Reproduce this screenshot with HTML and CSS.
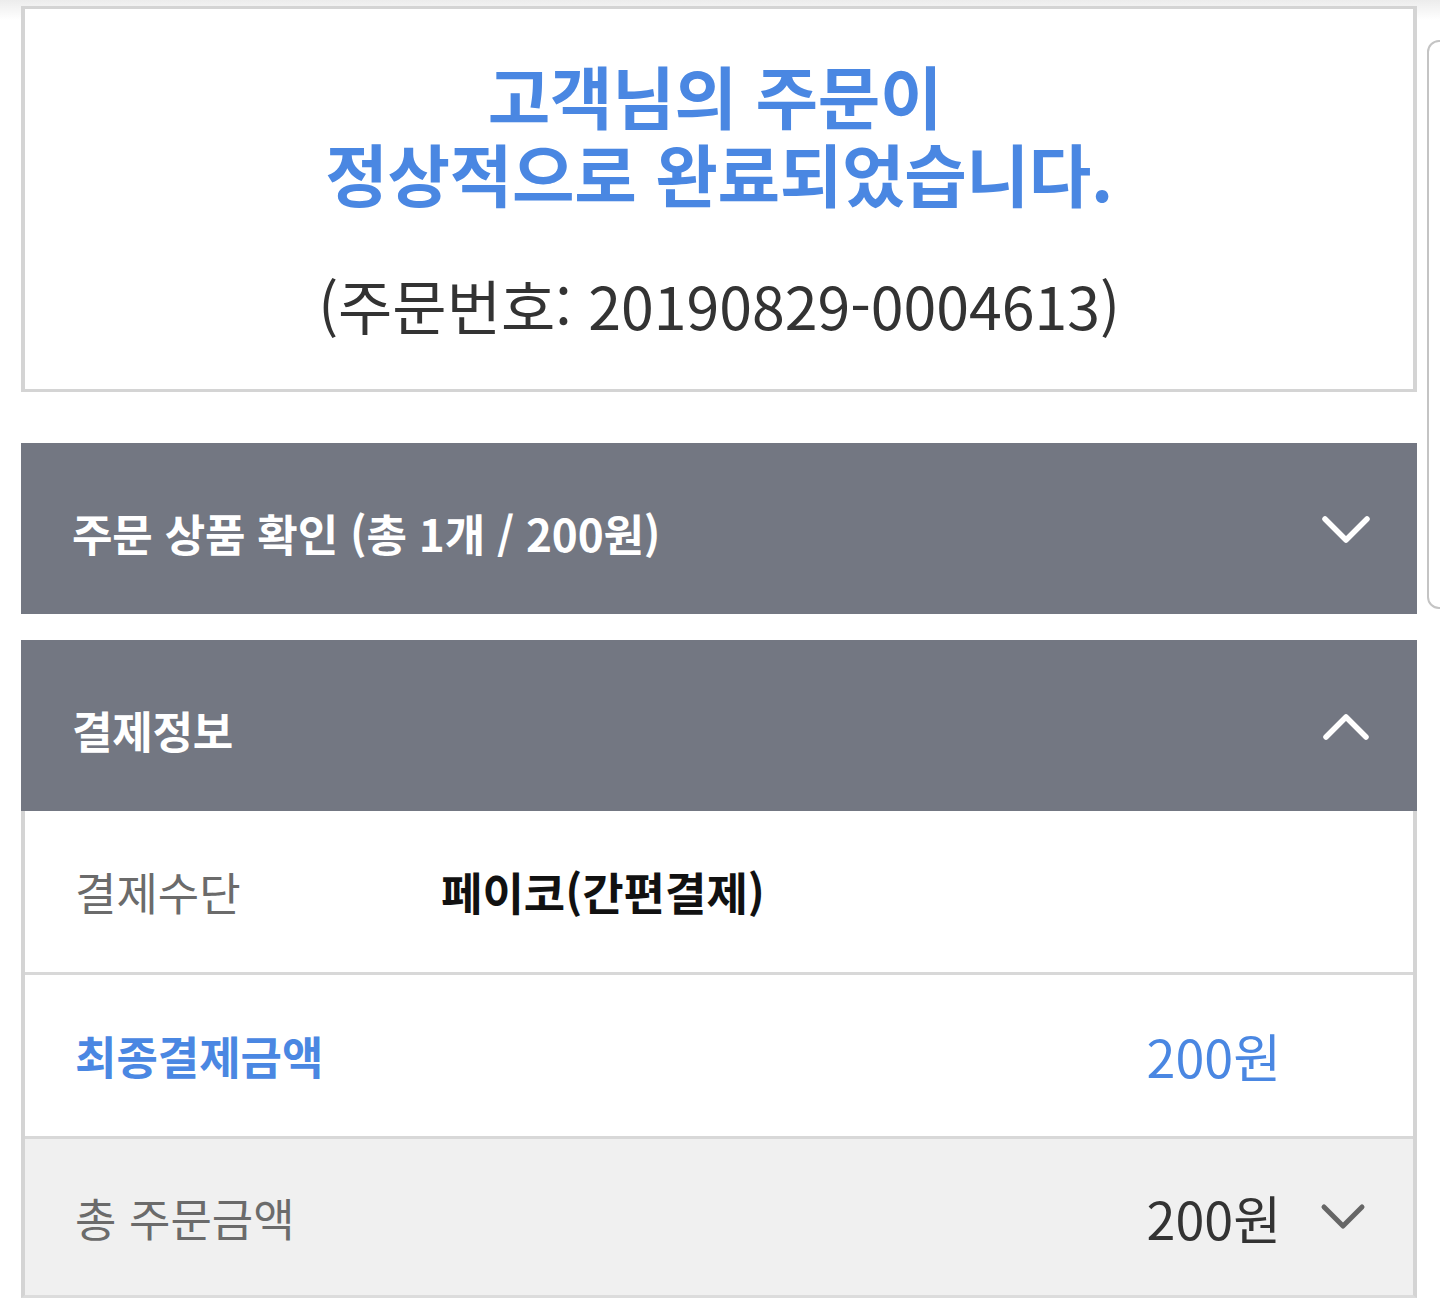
FILE: index.html
```html
<!DOCTYPE html>
<html lang="ko">
<head>
<meta charset="utf-8">
<link rel="stylesheet" href="styles.css">
</head>
<body>
<div class="topshade"></div>
<div class="sidetab"></div>
<main class="page">
  <section class="done">
    <h1 class="done-title"><span class="line">고객님의 주문이</span><span class="line">정상적으로 완료되었습니다.</span></h1>
    <p class="done-no">(주문번호: 20190829-0004613)</p>
  </section>

  <section class="panel">
    <div class="panel-head">
      <span>주문 상품 확인 (총 1개 / 200원)</span>
      <svg class="chev" width="50" height="32" viewBox="0 0 50 32"><polyline points="4,6 25,27 46,6" fill="none" stroke="#fff" stroke-width="5.5" stroke-linecap="round" stroke-linejoin="round"/></svg>
    </div>
  </section>

  <section class="panel panel-open">
    <div class="panel-head">
      <span>결제정보</span>
      <svg class="chev" width="50" height="32" viewBox="0 0 50 32"><polyline points="5,27 25,7 45,27" fill="none" stroke="#fff" stroke-width="5.5" stroke-linecap="round" stroke-linejoin="round"/></svg>
    </div>
    <div class="rows">
      <div class="row">
        <span class="label">결제수단</span>
        <span class="method">페이코(간편결제)</span>
      </div>
      <div class="row row-final">
        <span class="label label-blue">최종결제금액</span>
        <span class="amount amount-blue">200원</span>
      </div>
      <div class="row row-total">
        <span class="label">총 주문금액</span>
        <span class="amount">200원</span>
        <svg class="chev-small" width="48" height="30" viewBox="0 0 48 30"><polyline points="5,5 24,24 43,5" fill="none" stroke="#666" stroke-width="5" stroke-linecap="round" stroke-linejoin="round"/></svg>
      </div>
    </div>
  </section>
</main>
</body>
</html>
```

FILE: styles.css
```css
html, body {
  margin: 0;
  padding: 0;
  background: #fff;
}
body {
  font-family: "Noto Sans CJK KR", "Noto Sans", sans-serif;
  width: 1440px;
  height: 1314px;
  overflow: hidden;
  position: relative;
}
.topshade {
  position: absolute;
  left: 0;
  top: 0;
  width: 100%;
  height: 20px;
  background: linear-gradient(#ececec, #ffffff);
}
.sidetab {
  position: absolute;
  left: 1427px;
  top: 40px;
  width: 30px;
  height: 565px;
  border: 2px solid #c4c4c4;
  border-radius: 12px;
  background: #fff;
}
.page {
  position: relative;
  width: 1396px;
  margin-left: 21px;
  padding-top: 6px;
}
.done {
  border: 3px solid #d4d4d4;
  border-left-width: 4px;
  border-right-width: 4px;
  height: 380px;
  box-sizing: content-box;
  text-align: center;
  background: #fff;
}
.done-title {
  margin: 47px 0 0;
  font-size: 68px;
  font-weight: 700;
  color: #4a87e2;
  letter-spacing: -0.3px;
  display: flex;
  flex-direction: column;
  align-items: center;
}
.done-title .line {
  display: block;
  line-height: 78px;
  padding-right: 8px;
}
.done-title .line + .line {
  padding-right: 0;
}
.done-no {
  margin: 57px 0 0;
  font-size: 59px;
  line-height: 72px;
  font-weight: 400;
  color: #333;
}
.panel {
  margin-top: 51px;
}
.panel + .panel {
  margin-top: 26px;
}
.panel-head {
  height: 171px;
  background: #737782;
  color: #fff;
  display: flex;
  align-items: center;
  justify-content: space-between;
  padding: 0 46px 0 51px;
  font-size: 44px;
  font-weight: 700;
  letter-spacing: -0.2px;
}
.panel-head span {
  padding-top: 8px;
}
.rows {
  border-left: 4px solid #d4d4d4;
  border-right: 4px solid #d4d4d4;
  border-bottom: 3px solid #dcdcdc;
}
.row {
  display: flex;
  align-items: center;
  padding-left: 50px;
  padding-right: 132px;
  height: 161px;
  border-bottom: 3px solid #d8d8d8;
  background: #fff;
}
.row-total {
  border-bottom: none;
  height: 156px;
  background: #f0f0f0;
  padding-right: 46px;
}
.label {
  width: 366px;
  font-size: 45px;
  color: #6b6b6b;
  font-weight: 400;
}
.label-blue {
  color: #4a87e2;
  font-weight: 700;
}
.method {
  font-size: 45px;
  font-weight: 700;
  color: #111;
}
.amount {
  margin-left: auto;
  font-size: 52px;
  color: #333;
}
.amount-blue {
  color: #4a87e2;
}
.chev-small {
  margin-left: 38px;
}
```
